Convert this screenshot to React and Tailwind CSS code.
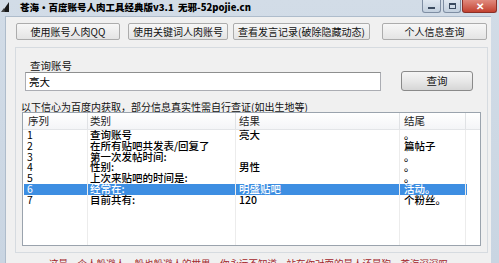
import React from "react";

const rows = [
  { n: "1", c: "查询账号", r: "亮大", e: "。" },
  { n: "2", c: "在所有贴吧共发表/回复了", r: "", e: "篇帖子" },
  { n: "3", c: "第一次发帖时间:", r: "", e: "。" },
  { n: "4", c: "性别:", r: "男性", e: "。" },
  { n: "5", c: "上次来贴吧的时间是:", r: "", e: "。" },
  { n: "6", c: "经常在:", r: "明盛贴吧", e: "活动。", sel: true },
  { n: "7", c: "目前共有:", r: "120", e: "个粉丝。" },
];

function Btn({ className, children }) {
  return (
    <div
      className={
        "h-[17px] flex items-center justify-center border border-[#acacac] rounded-[2px] bg-gradient-to-b from-[#f7f7f7] to-[#e4e4e4] text-[10px] leading-none text-[#111] whitespace-nowrap " +
        className
      }
    >
      {children}
    </div>
  );
}

export default function App() {
  return (
    <div className="w-[499px] h-[263px] overflow-hidden bg-gradient-to-b from-[#d2dce7] to-[#c9d5e2] flex flex-col font-['Noto_Sans_CJK_SC','Noto_Sans',sans-serif]">
      {/* title bar */}
      <div className="h-[16px] flex items-start shrink-0">
        <svg width="9" height="11" viewBox="0 0 9 11" className="ml-[1px] mt-[2px]">
          <polygon points="8,0 8,10 1,10" fill="#1a1a1a" />
          <polygon points="0,10 3,6 4,10" fill="#444" />
        </svg>
        <div className="ml-[10px] mt-[1px] text-[9.5px] leading-[13px] font-black text-black whitespace-nowrap">
          苍海•百度账号人肉工具经典版v3.1&nbsp;&nbsp;无邪-52pojie.cn
        </div>
        <div className="ml-auto mr-[2px] flex items-start">
          <div className="w-[19px] h-[13px] border border-t-0 border-[#7f8ea3] rounded-b-[3px] bg-gradient-to-b from-[#dfe7f0] to-[#c3d0de] flex items-center justify-center">
            <div className="w-[7px] h-[2px] bg-[#3b4b60] mt-[4px]" />
          </div>
          <div className="ml-[2px] w-[18px] h-[13px] border border-t-0 border-[#7f8ea3] rounded-b-[3px] bg-gradient-to-b from-[#dfe7f0] to-[#c3d0de] flex items-center justify-center">
            <div className="w-[7px] h-[6px] border border-[#3b4b60] border-t-2" />
          </div>
          <div className="ml-[1px] w-[35px] h-[13px] border border-t-0 border-[#8a3027] rounded-b-[3px] bg-gradient-to-b from-[#e08a7e] to-[#c2402f] flex items-center justify-center text-white text-[10px] font-bold leading-none">
            ✕
          </div>
        </div>
      </div>

      {/* window body */}
      <div className="ml-[5px] w-[486px] flex-1 bg-[#f0f0f0] border-t border-l border-[#aebccb] flex flex-col">
        {/* top buttons */}
        <div className="flex mt-[6px] pl-[10px]">
          <Btn className="w-[104px]">使用账号人肉QQ</Btn>
          <Btn className="ml-[8px] w-[100px]">使用关键词人肉账号</Btn>
          <Btn className="ml-[5px] w-[137px]">查看发言记录(破除隐藏动态)</Btn>
          <Btn className="ml-[12px] w-[105px]">个人信息查询</Btn>
        </div>

        {/* group */}
        <div className="ml-[9px] mt-[7px] w-[473px] h-[206px] border border-[#d6dbe0] flex flex-col shrink-0">
          <div className="ml-[14px] mt-[12px] text-[10.5px] leading-[11px] text-[#111]">查询账号</div>
          <div className="flex items-start mt-[1px]">
            <div className="ml-[9px] w-[356px] h-[19px] bg-white border border-[#abadb3] border-t-[#8e8f8f] flex items-center pl-[3px] text-[10.5px] text-black">
              亮大
            </div>
            <div className="ml-[20px] -mt-[1px] w-[72px] h-[20px] border border-[#8a8a8a] rounded-[3px] bg-gradient-to-b from-[#f5f5f5] via-[#e8e8e8] to-[#d6d6d6] flex items-center justify-center text-[10.5px] text-[#111]">
              查询
            </div>
          </div>
          <div className="ml-[5px] mt-[10px] text-[10px] leading-[11px] text-[#111] whitespace-nowrap">
            以下信心为百度内获取，部分信息真实性需自行查证(如出生地等)
          </div>

          {/* list view */}
          <div className="ml-[6px] w-[459px] h-[134px] bg-white border border-[#9aa3ad] flex flex-col overflow-hidden">
            <div className="h-[17px] flex items-center border-b border-[#e3e5e8] bg-gradient-to-b from-white to-[#f4f5f7] text-[10.5px] text-[#222] shrink-0">
              <div className="w-[65px] h-full pl-[5px] flex items-center border-r border-[#e0e2e5]">序列</div>
              <div className="w-[148px] h-full pl-[2px] flex items-center border-r border-[#e0e2e5]">类别</div>
              <div className="w-[164px] h-full pl-[3px] flex items-center border-r border-[#e0e2e5]">结果</div>
              <div className="w-[66px] h-full pl-[4px] flex items-center border-r border-[#e0e2e5]">结尾</div>
              <div className="flex-1" />
            </div>
            <div className="flex-1 relative">
              {rows.map((row) => (
                <div key={row.n} className="h-[10.8px] flex text-[10.5px] leading-[10.8px] whitespace-nowrap">
                  <div
                    className={
                      "w-[443px] flex " +
                      (row.sel ? "bg-[#3d8ee2] text-white ml-[1px]" : "text-black")
                    }
                  >
                    <div className={"w-[65px] pl-[4px] " + (row.sel ? "-ml-[1px]" : "")}>{row.n}</div>
                    <div className="w-[148px] pl-[2px] font-medium">{row.c}</div>
                    <div className="w-[164px] pl-[3px] font-medium">{row.r}</div>
                    <div className="w-[66px] pl-[4px] font-medium">{row.e}</div>
                  </div>
                </div>
              ))}
              <div className="absolute inset-0 flex pointer-events-none">
                <div className="w-[65px] border-r border-[#ececec]" />
                <div className="w-[148px] border-r border-[#ececec]" />
                <div className="w-[164px] border-r border-[#ececec]" />
                <div className="w-[66px] border-r border-[#ececec]" />
              </div>
            </div>
          </div>
        </div>

        <div className="ml-[43px] mt-[4px] text-[9.5px] leading-[12px] text-[#a3262b] whitespace-nowrap">
          这是一个人躲避人，躲也躲避人的世界，你永远不知道，站在你对面的是人还是狗一苍海深深叹
        </div>
      </div>
    </div>
  );
}
